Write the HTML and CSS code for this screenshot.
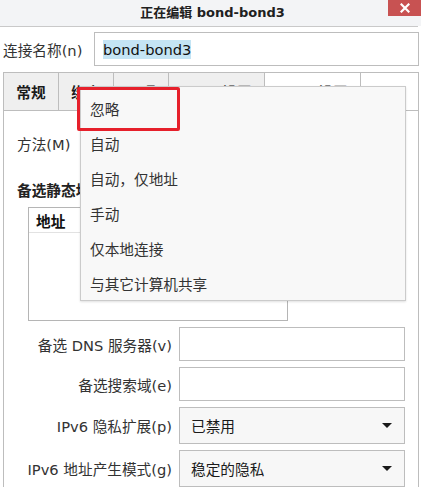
FILE: index.html
```html
<!DOCTYPE html>
<html lang="zh-CN">
<head>
<meta charset="utf-8">
<title>正在编辑 bond-bond3</title>
<link rel="stylesheet" href="styles.css">
</head>
<body>
<div class="titlebar">
  <div class="title">正在编辑 bond-bond3</div>
  <div class="close" aria-label="关闭">
    <svg width="10" height="10" viewBox="0 0 10 10"><path d="M1.5 1.5 L8.5 8.5 M8.5 1.5 L1.5 8.5" stroke="#fff" stroke-width="2.2" stroke-linecap="square"/></svg>
  </div>
</div>
<div class="window">
  <div class="name-row">
    <span class="name-label">连接名称(n)</span>
    <div class="entry name-entry"><span class="sel">bond-bond3</span></div>
  </div>
  <div class="notebook">
    <div class="tabs">
      <div class="tab">常规</div>
      <div class="tab">绑定</div>
      <div class="tab">代理</div>
      <div class="tab wide">IPv4 设置</div>
      <div class="tab wide active">IPv6 设置</div>
      <div class="tab-fill"></div>
    </div>
    <div class="page">
      <div class="method-row">
        <span class="method-label">方法(M)</span>
        <div class="combo method-combo"><span></span><span class="arrow"></span></div>
      </div>
      <div class="section-title">备选静态地址</div>
      <div class="addr-table">
        <div class="addr-head">地址</div>
      </div>
      <div class="form">
        <span class="flabel">备选 DNS 服务器(v)</span>
        <div class="entry"></div>
        <span class="flabel">备选搜索域(e)</span>
        <div class="entry"></div>
        <span class="flabel">IPv6 隐私扩展(p)</span>
        <div class="combo"><span>已禁用</span><span class="arrow"></span></div>
        <span class="flabel">IPv6 地址产生模式(g)</span>
        <div class="combo"><span>稳定的隐私</span><span class="arrow"></span></div>
      </div>
    </div>
  </div>
</div>
<div class="popup">
  <div class="item">忽略</div>
  <div class="item">自动</div>
  <div class="item">自动，仅地址</div>
  <div class="item">手动</div>
  <div class="item">仅本地连接</div>
  <div class="item">与其它计算机共享</div>
</div>
<div class="highlight"></div>
</body>
</html>
```
FILE: styles.css
```css
html, body {
  margin: 0;
  padding: 0;
  background: #ffffff;
}
body {
  width: 421px;
  height: 487px;
  overflow: hidden;
  position: relative;
  font-family: "DejaVu Sans", "Noto Sans CJK SC", sans-serif;
  font-size: 14.67px;
  color: #2e3436;
}
.titlebar {
  height: 26px;
  background: #f3f4f6;
  display: grid;
  grid-template-columns: 1fr auto 1fr;
  align-items: center;
  position: relative;
}
.titlebar::after {
  content: "";
  position: absolute;
  left: 0;
  right: 3px;
  bottom: -1px;
  height: 1px;
  background: #c9c9c9;
}
.title {
  grid-column: 2;
  font-weight: bold;
  font-size: 13px;
  color: #202020;
  line-height: 26px;
  padding-left: 4px;
}
.close {
  grid-column: 3;
  justify-self: end;
  align-self: start;
  width: 33px;
  height: 16px;
  background: #c85252;
  display: flex;
  align-items: center;
  justify-content: center;
}
.window {
  padding: 6px 2px 0 3px;
}
.name-row {
  display: flex;
  align-items: center;
}
.name-label {
  width: 91px;
  color: #333;
}
.entry {
  box-sizing: border-box;
  height: 34px;
  border: 1px solid #bdbdbd;
  background: #fff;
  display: flex;
  align-items: center;
}
.name-entry {
  flex: 1;
  padding-left: 8px;
}
.sel {
  background: #c4e4f4;
  color: #111;
  line-height: 19px;
}
.notebook {
  margin-top: 6px;
}
.tabs {
  display: flex;
  border-top: 1px solid #bdbdbd;
  border-left: 1px solid #bdbdbd;
  height: 39px;
  box-sizing: border-box;
}
.tab {
  box-sizing: border-box;
  width: 55px;
  border-right: 1px solid #bdbdbd;
  border-bottom: 1px solid #bdbdbd;
  background: #efefef;
  display: flex;
  align-items: center;
  justify-content: center;
  font-weight: bold;
  color: #1a1a1a;
}
.tab.wide {
  width: 96px;
}
.tab.active {
  background: #fff;
  border-bottom-color: transparent;
}
.tab-fill {
  flex: 1;
  border-right: 1px solid #bdbdbd;
  border-bottom: 1px solid #bdbdbd;
}
.page {
  border-left: 1px solid #bdbdbd;
  border-right: 1px solid #bdbdbd;
  padding: 14px 13px 0 13px;
  height: 362px;
}
.method-row {
  display: flex;
  align-items: center;
}
.method-label {
  width: 63px;
  color: #333;
}
.combo {
  box-sizing: border-box;
  height: 37px;
  border: 1px solid #bdbdbd;
  background: #f7f7f7;
  display: flex;
  align-items: center;
  justify-content: space-between;
  padding: 0 12px 0 11px;
  color: #1a1a1a;
}
.method-combo {
  flex: 1;
  height: 36px;
}
.arrow {
  width: 0;
  height: 0;
  border-left: 5px solid transparent;
  border-right: 5px solid transparent;
  border-top: 5px solid #1a1a1a;
}
.section-title {
  margin-top: 20px;
  line-height: 20px;
  font-weight: bold;
  color: #222;
}
.addr-table {
  margin: 6px 0 0 11px;
  width: 260px;
  height: 114px;
  box-sizing: border-box;
  border: 1px solid #b5b5b5;
}
.addr-head {
  height: 24px;
  border-bottom: 1px solid #e2e2e2;
  padding-left: 7px;
  display: flex;
  align-items: center;
  font-weight: bold;
  color: #111;
}
.form {
  margin-top: 6px;
  display: grid;
  grid-template-columns: 155px 226px;
  grid-template-rows: 34px 34px 37px 37px;
  column-gap: 7px;
  row-gap: 6px;
  align-items: center;
}
.flabel {
  justify-self: end;
  color: #333;
  white-space: nowrap;
}
.form .entry, .form .combo {
  height: 100%;
}
.popup {
  position: absolute;
  left: 80px;
  top: 86px;
  width: 326px;
  height: 215px;
  box-sizing: border-box;
  background: #f8f8f8;
  border: 1px solid #cbcbcb;
  box-shadow: 0 1px 2px rgba(0, 0, 0, 0.12);
  padding-top: 5px;
}
.item {
  height: 35px;
  line-height: 35px;
  padding-left: 9px;
  color: #333;
}
.highlight {
  position: absolute;
  left: 77px;
  top: 87px;
  width: 103px;
  height: 44px;
  box-sizing: border-box;
  border: 3.5px solid #e6202b;
  border-radius: 2px;
}
```
